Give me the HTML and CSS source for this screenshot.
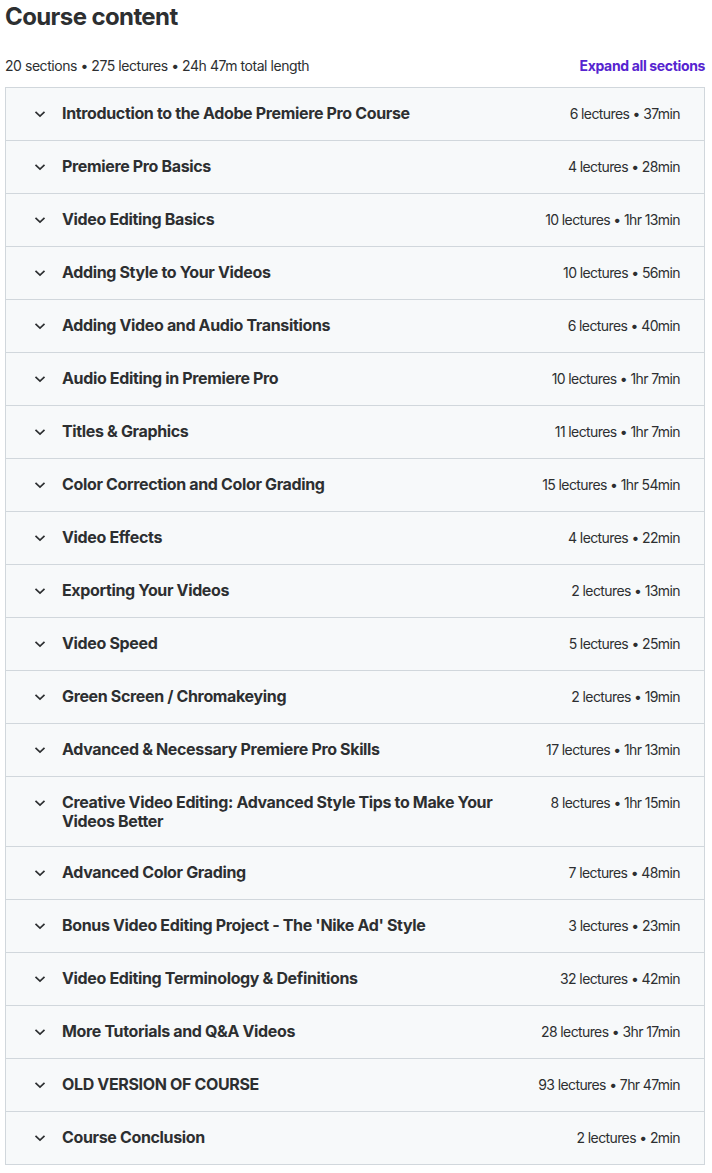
FILE: index.html
```html
<!DOCTYPE html>
<html>
<head>
<meta charset="utf-8">
<link rel="stylesheet" href="styles.css">
</head>
<body>
<div class="page">
  <h2 class="heading">Course content</h2>
  <div class="meta">
    <span class="meta-text">20 sections • 275 lectures • 24h 47m total length</span>
    <span class="expand">Expand all sections</span>
  </div>
  <div class="list">
    <div class="row"><span class="chev"><svg width="12" height="8" viewBox="0 0 12 8"><path d="M1.5 1.8 L6 6 L10.5 1.8" fill="none" stroke="#2d2f31" stroke-width="1.7"/></svg></span><span class="title">Introduction to the Adobe Premiere Pro Course</span><span class="info">6 lectures • 37min</span></div>
    <div class="row"><span class="chev"><svg width="12" height="8" viewBox="0 0 12 8"><path d="M1.5 1.8 L6 6 L10.5 1.8" fill="none" stroke="#2d2f31" stroke-width="1.7"/></svg></span><span class="title">Premiere Pro Basics</span><span class="info">4 lectures • 28min</span></div>
    <div class="row"><span class="chev"><svg width="12" height="8" viewBox="0 0 12 8"><path d="M1.5 1.8 L6 6 L10.5 1.8" fill="none" stroke="#2d2f31" stroke-width="1.7"/></svg></span><span class="title">Video Editing Basics</span><span class="info">10 lectures • 1hr 13min</span></div>
    <div class="row"><span class="chev"><svg width="12" height="8" viewBox="0 0 12 8"><path d="M1.5 1.8 L6 6 L10.5 1.8" fill="none" stroke="#2d2f31" stroke-width="1.7"/></svg></span><span class="title">Adding Style to Your Videos</span><span class="info">10 lectures • 56min</span></div>
    <div class="row"><span class="chev"><svg width="12" height="8" viewBox="0 0 12 8"><path d="M1.5 1.8 L6 6 L10.5 1.8" fill="none" stroke="#2d2f31" stroke-width="1.7"/></svg></span><span class="title">Adding Video and Audio Transitions</span><span class="info">6 lectures • 40min</span></div>
    <div class="row"><span class="chev"><svg width="12" height="8" viewBox="0 0 12 8"><path d="M1.5 1.8 L6 6 L10.5 1.8" fill="none" stroke="#2d2f31" stroke-width="1.7"/></svg></span><span class="title">Audio Editing in Premiere Pro</span><span class="info">10 lectures • 1hr 7min</span></div>
    <div class="row"><span class="chev"><svg width="12" height="8" viewBox="0 0 12 8"><path d="M1.5 1.8 L6 6 L10.5 1.8" fill="none" stroke="#2d2f31" stroke-width="1.7"/></svg></span><span class="title">Titles &amp; Graphics</span><span class="info">11 lectures • 1hr 7min</span></div>
    <div class="row"><span class="chev"><svg width="12" height="8" viewBox="0 0 12 8"><path d="M1.5 1.8 L6 6 L10.5 1.8" fill="none" stroke="#2d2f31" stroke-width="1.7"/></svg></span><span class="title">Color Correction and Color Grading</span><span class="info">15 lectures • 1hr 54min</span></div>
    <div class="row"><span class="chev"><svg width="12" height="8" viewBox="0 0 12 8"><path d="M1.5 1.8 L6 6 L10.5 1.8" fill="none" stroke="#2d2f31" stroke-width="1.7"/></svg></span><span class="title">Video Effects</span><span class="info">4 lectures • 22min</span></div>
    <div class="row"><span class="chev"><svg width="12" height="8" viewBox="0 0 12 8"><path d="M1.5 1.8 L6 6 L10.5 1.8" fill="none" stroke="#2d2f31" stroke-width="1.7"/></svg></span><span class="title">Exporting Your Videos</span><span class="info">2 lectures • 13min</span></div>
    <div class="row"><span class="chev"><svg width="12" height="8" viewBox="0 0 12 8"><path d="M1.5 1.8 L6 6 L10.5 1.8" fill="none" stroke="#2d2f31" stroke-width="1.7"/></svg></span><span class="title">Video Speed</span><span class="info">5 lectures • 25min</span></div>
    <div class="row"><span class="chev"><svg width="12" height="8" viewBox="0 0 12 8"><path d="M1.5 1.8 L6 6 L10.5 1.8" fill="none" stroke="#2d2f31" stroke-width="1.7"/></svg></span><span class="title">Green Screen / Chromakeying</span><span class="info">2 lectures • 19min</span></div>
    <div class="row"><span class="chev"><svg width="12" height="8" viewBox="0 0 12 8"><path d="M1.5 1.8 L6 6 L10.5 1.8" fill="none" stroke="#2d2f31" stroke-width="1.7"/></svg></span><span class="title">Advanced &amp; Necessary Premiere Pro Skills</span><span class="info">17 lectures • 1hr 13min</span></div>
    <div class="row"><span class="chev"><svg width="12" height="8" viewBox="0 0 12 8"><path d="M1.5 1.8 L6 6 L10.5 1.8" fill="none" stroke="#2d2f31" stroke-width="1.7"/></svg></span><span class="title">Creative Video Editing: Advanced Style Tips to Make Your Videos Better</span><span class="info">8 lectures • 1hr 15min</span></div>
    <div class="row"><span class="chev"><svg width="12" height="8" viewBox="0 0 12 8"><path d="M1.5 1.8 L6 6 L10.5 1.8" fill="none" stroke="#2d2f31" stroke-width="1.7"/></svg></span><span class="title">Advanced Color Grading</span><span class="info">7 lectures • 48min</span></div>
    <div class="row"><span class="chev"><svg width="12" height="8" viewBox="0 0 12 8"><path d="M1.5 1.8 L6 6 L10.5 1.8" fill="none" stroke="#2d2f31" stroke-width="1.7"/></svg></span><span class="title">Bonus Video Editing Project - The 'Nike Ad' Style</span><span class="info">3 lectures • 23min</span></div>
    <div class="row"><span class="chev"><svg width="12" height="8" viewBox="0 0 12 8"><path d="M1.5 1.8 L6 6 L10.5 1.8" fill="none" stroke="#2d2f31" stroke-width="1.7"/></svg></span><span class="title">Video Editing Terminology &amp; Definitions</span><span class="info">32 lectures • 42min</span></div>
    <div class="row"><span class="chev"><svg width="12" height="8" viewBox="0 0 12 8"><path d="M1.5 1.8 L6 6 L10.5 1.8" fill="none" stroke="#2d2f31" stroke-width="1.7"/></svg></span><span class="title">More Tutorials and Q&amp;A Videos</span><span class="info">28 lectures • 3hr 17min</span></div>
    <div class="row"><span class="chev"><svg width="12" height="8" viewBox="0 0 12 8"><path d="M1.5 1.8 L6 6 L10.5 1.8" fill="none" stroke="#2d2f31" stroke-width="1.7"/></svg></span><span class="title">OLD VERSION OF COURSE</span><span class="info">93 lectures • 7hr 47min</span></div>
    <div class="row"><span class="chev"><svg width="12" height="8" viewBox="0 0 12 8"><path d="M1.5 1.8 L6 6 L10.5 1.8" fill="none" stroke="#2d2f31" stroke-width="1.7"/></svg></span><span class="title">Course Conclusion</span><span class="info">2 lectures • 2min</span></div>
  </div>
</div>
</body>
</html>
```

FILE: styles.css
```css
html, body {
  margin: 0;
  padding: 0;
  background: #ffffff;
}
body {
  font-family: Inter, "Liberation Sans", sans-serif;
  color: #2d2f31;
}
.page {
  width: 700px;
  padding: 0 0 0 5px;
}
.heading {
  margin: 0;
  padding-top: 3px;
  font-size: 24px;
  line-height: 28px;
  font-weight: 700;
  letter-spacing: -0.6px;
}
.meta {
  display: flex;
  justify-content: space-between;
  align-items: baseline;
  margin-top: 25px;
  margin-bottom: 11px;
  font-size: 14px;
  line-height: 20px;
}
.meta-text {
  letter-spacing: -0.45px;
}
.expand {
  color: #5624d0;
  font-weight: 700;
  letter-spacing: -0.35px;
}
.list {
  border: 1px solid #d1d7dc;
  border-bottom: none;
}
.row {
  display: flex;
  align-items: flex-start;
  background: #f7f9fa;
  border-bottom: 1px solid #d1d7dc;
  padding: 16px 24px 16px 28px;
  min-height: 20px;
}
.chev {
  flex: none;
  width: 12px;
  height: 20px;
  display: flex;
  align-items: center;
  margin-right: 16px;
}
.chev svg {
  display: block;
}
.title {
  flex: 1;
  font-size: 16px;
  line-height: 18.5px;
  font-weight: 700;
  letter-spacing: -0.35px;
  padding-right: 40px;
}
.info {
  flex: none;
  font-size: 14px;
  line-height: 20px;
  letter-spacing: -0.6px;
  white-space: nowrap;
}
```
